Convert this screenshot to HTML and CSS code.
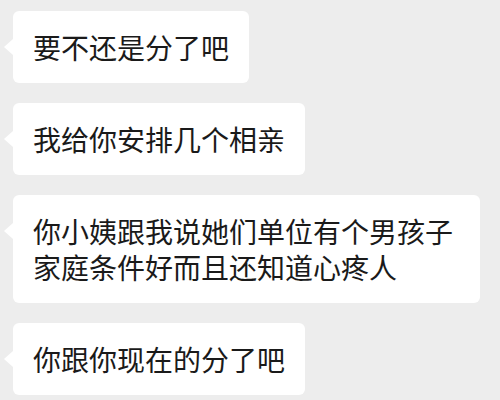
FILE: index.html
```html
<!DOCTYPE html>
<html lang="zh-CN">
<head>
    <meta charset="UTF-8">
    <meta name="viewport" content="width=device-width, initial-scale=1.0">
    <title>聊天记录</title>
    <link rel="stylesheet" href="styles.css">
</head>
<body>
    <div class="chat">
        <div class="bubble">要不还是分了吧</div>
        <div class="bubble">我给你安排几个相亲</div>
        <div class="bubble">你小姨跟我说她们单位有个男孩子家庭条件好而且还知道心疼人</div>
        <div class="bubble">你跟你现在的分了吧</div>
    </div>
</body>
</html>
```

FILE: styles.css
```css
body {
    margin: 0;
    padding: 0;
    background-color: #ededed;
    font-family: "Noto Sans CJK SC", "Noto Sans", sans-serif;
}
.chat {
    display: flex;
    flex-direction: column;
    align-items: flex-start;
    gap: 20px;
    padding: 11px 0 0 13px;
}
.bubble {
    position: relative;
    max-width: 427px;
    padding: 18px 20px;
    background-color: #ffffff;
    border-radius: 6px;
    color: #1a1a1a;
    font-size: 28px;
    line-height: 36px;
}
/* the little arrow on the left side */
.bubble::before {
    content: "";
    position: absolute;
    left: -9px;
    top: 28px;
    border-top: 8px solid transparent;
    border-bottom: 8px solid transparent;
    border-right: 9px solid #ffffff;
}
```
